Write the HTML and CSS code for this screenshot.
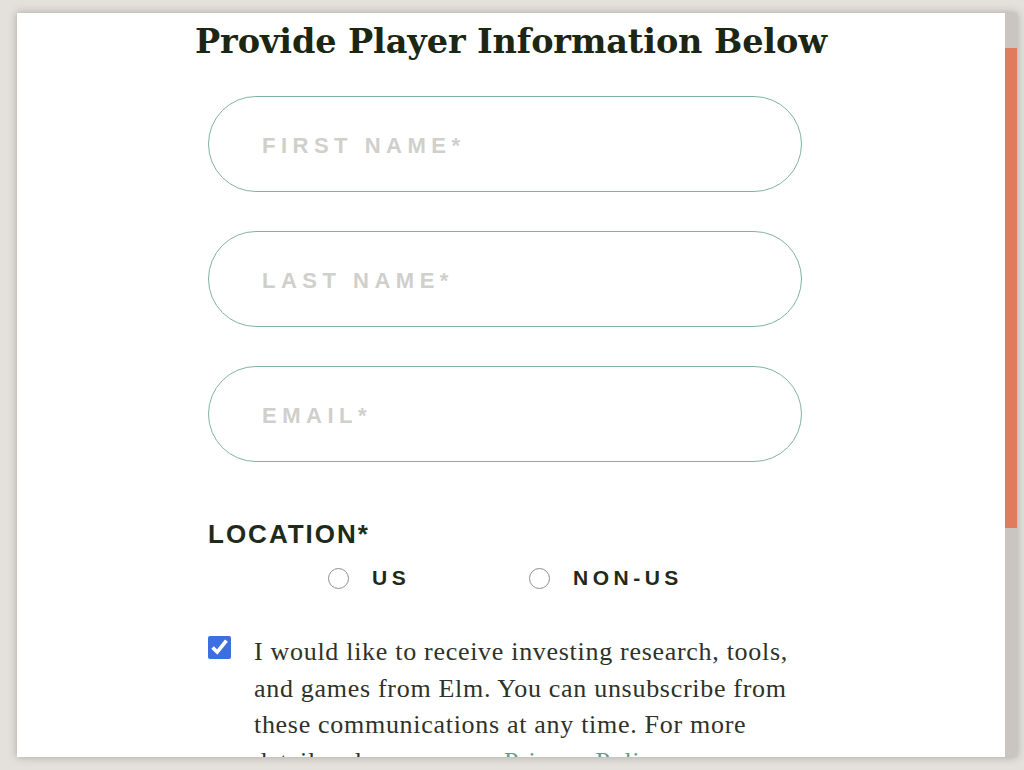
FILE: index.html
```html
<!DOCTYPE html>
<html lang="en">
<head>
  <meta charset="UTF-8" />
  <meta name="viewport" content="width=device-width, initial-scale=1.0"/>
  <title>Player Information</title>
  <link rel="stylesheet" href="styles.css">
</head>
<body>
  <!-- Modal panel -->
  <div class="panel">
    <div class="panel-body">
      <h1 class="title">Provide Player Information Below</h1>

      <form class="player-form">
        <input class="pill-input" type="text" placeholder="First Name*" />
        <input class="pill-input" type="text" placeholder="Last Name*" />
        <input class="pill-input" type="email" placeholder="Email*" />

        <div class="field-label">Location*</div>
        <div class="radio-row">
          <label class="radio-option">
            <input type="radio" name="location" value="us" />
            <span>US</span>
          </label>
          <label class="radio-option">
            <input type="radio" name="location" value="non-us" />
            <span>Non-US</span>
          </label>
        </div>

        <label class="opt-in">
          <input type="checkbox" checked />
          <span class="opt-in-text">I would like to receive investing research, tools, and games from Elm. You can unsubscribe from these communications at any time. For more details, please see our <a href="#">Privacy Policy</a>.</span>
        </label>
      </form>
    </div>

    <!-- Scrollbar -->
    <div class="scroll-track">
      <div class="scroll-thumb"></div>
    </div>
  </div>
</body>
</html>
```

FILE: styles.css
```css
* {
  box-sizing: border-box;
}

body {
  margin: 0;
  background: #e4e0dc;
  padding: 13px 7px 13px 17px;
  height: 770px;
  overflow: hidden;
}

.panel {
  display: flex;
  width: 1000px;
  height: 744px;
  background: #fff;
  box-shadow: 0 0 8px rgba(60, 50, 40, 0.35);
}

.panel-body {
  flex: 1;
  overflow: hidden;
}

.scroll-track {
  width: 12px;
  background: #cac5c1;
}

.scroll-thumb {
  height: 480px;
  margin-top: 35px;
  background: #e07c5e;
}

.title {
  margin: 9px 0 0;
  text-align: center;
  font-family: "DejaVu Serif", serif;
  font-weight: bold;
  font-size: 33.5px;
  line-height: 40px;
  color: #1c2713;
  letter-spacing: -0.1px;
}

.player-form {
  width: 594px;
  margin: 34px 0 0 191px;
  display: flex;
  flex-direction: column;
}

.pill-input {
  height: 96px;
  margin-bottom: 39px;
  border: 1.6px solid #80b4a1;
  border-radius: 48px;
  padding: 4px 0 0 53px;
  font-family: "Liberation Sans", Arial, sans-serif;
  font-weight: bold;
  font-size: 22px;
  letter-spacing: 5.5px;
  text-transform: uppercase;
  color: #333;
  outline: none;
}

.pill-input::placeholder {
  color: #cfd0cb;
  text-transform: uppercase;
}

.pill-input:last-of-type {
  margin-bottom: 0;
}

.field-label {
  margin-top: 57px;
  font-family: "Liberation Sans", Arial, sans-serif;
  font-weight: bold;
  font-size: 26px;
  line-height: 30px;
  letter-spacing: 2px;
  text-transform: uppercase;
  color: #1f2a18;
}

.radio-row {
  display: flex;
  padding-left: 120px;
  margin-top: 17px;
}

.radio-option {
  width: 201px;
  display: flex;
  align-items: center;
  gap: 23px;
  font-family: "Liberation Sans", Arial, sans-serif;
  font-weight: bold;
  font-size: 21px;
  letter-spacing: 4.5px;
  text-transform: uppercase;
  color: #1f2a18;
}

.radio-option input {
  appearance: none;
  margin: 0;
  width: 21px;
  height: 21px;
  border: 1.5px solid #8e8e8e;
  border-radius: 50%;
}

.opt-in {
  display: flex;
  align-items: flex-start;
  gap: 23px;
  margin-top: 44px;
}

.opt-in input {
  margin: 2px 0 0;
  width: 23px;
  height: 23px;
  flex-shrink: 0;
  accent-color: #3b6fe2;
}

.opt-in-text {
  font-family: "Liberation Serif", "Times New Roman", serif;
  font-size: 26px;
  line-height: 36.5px;
  letter-spacing: 0.7px;
  color: #2e3229;
}

.opt-in-text a {
  color: #5f9e89;
  text-decoration: none;
}
```
